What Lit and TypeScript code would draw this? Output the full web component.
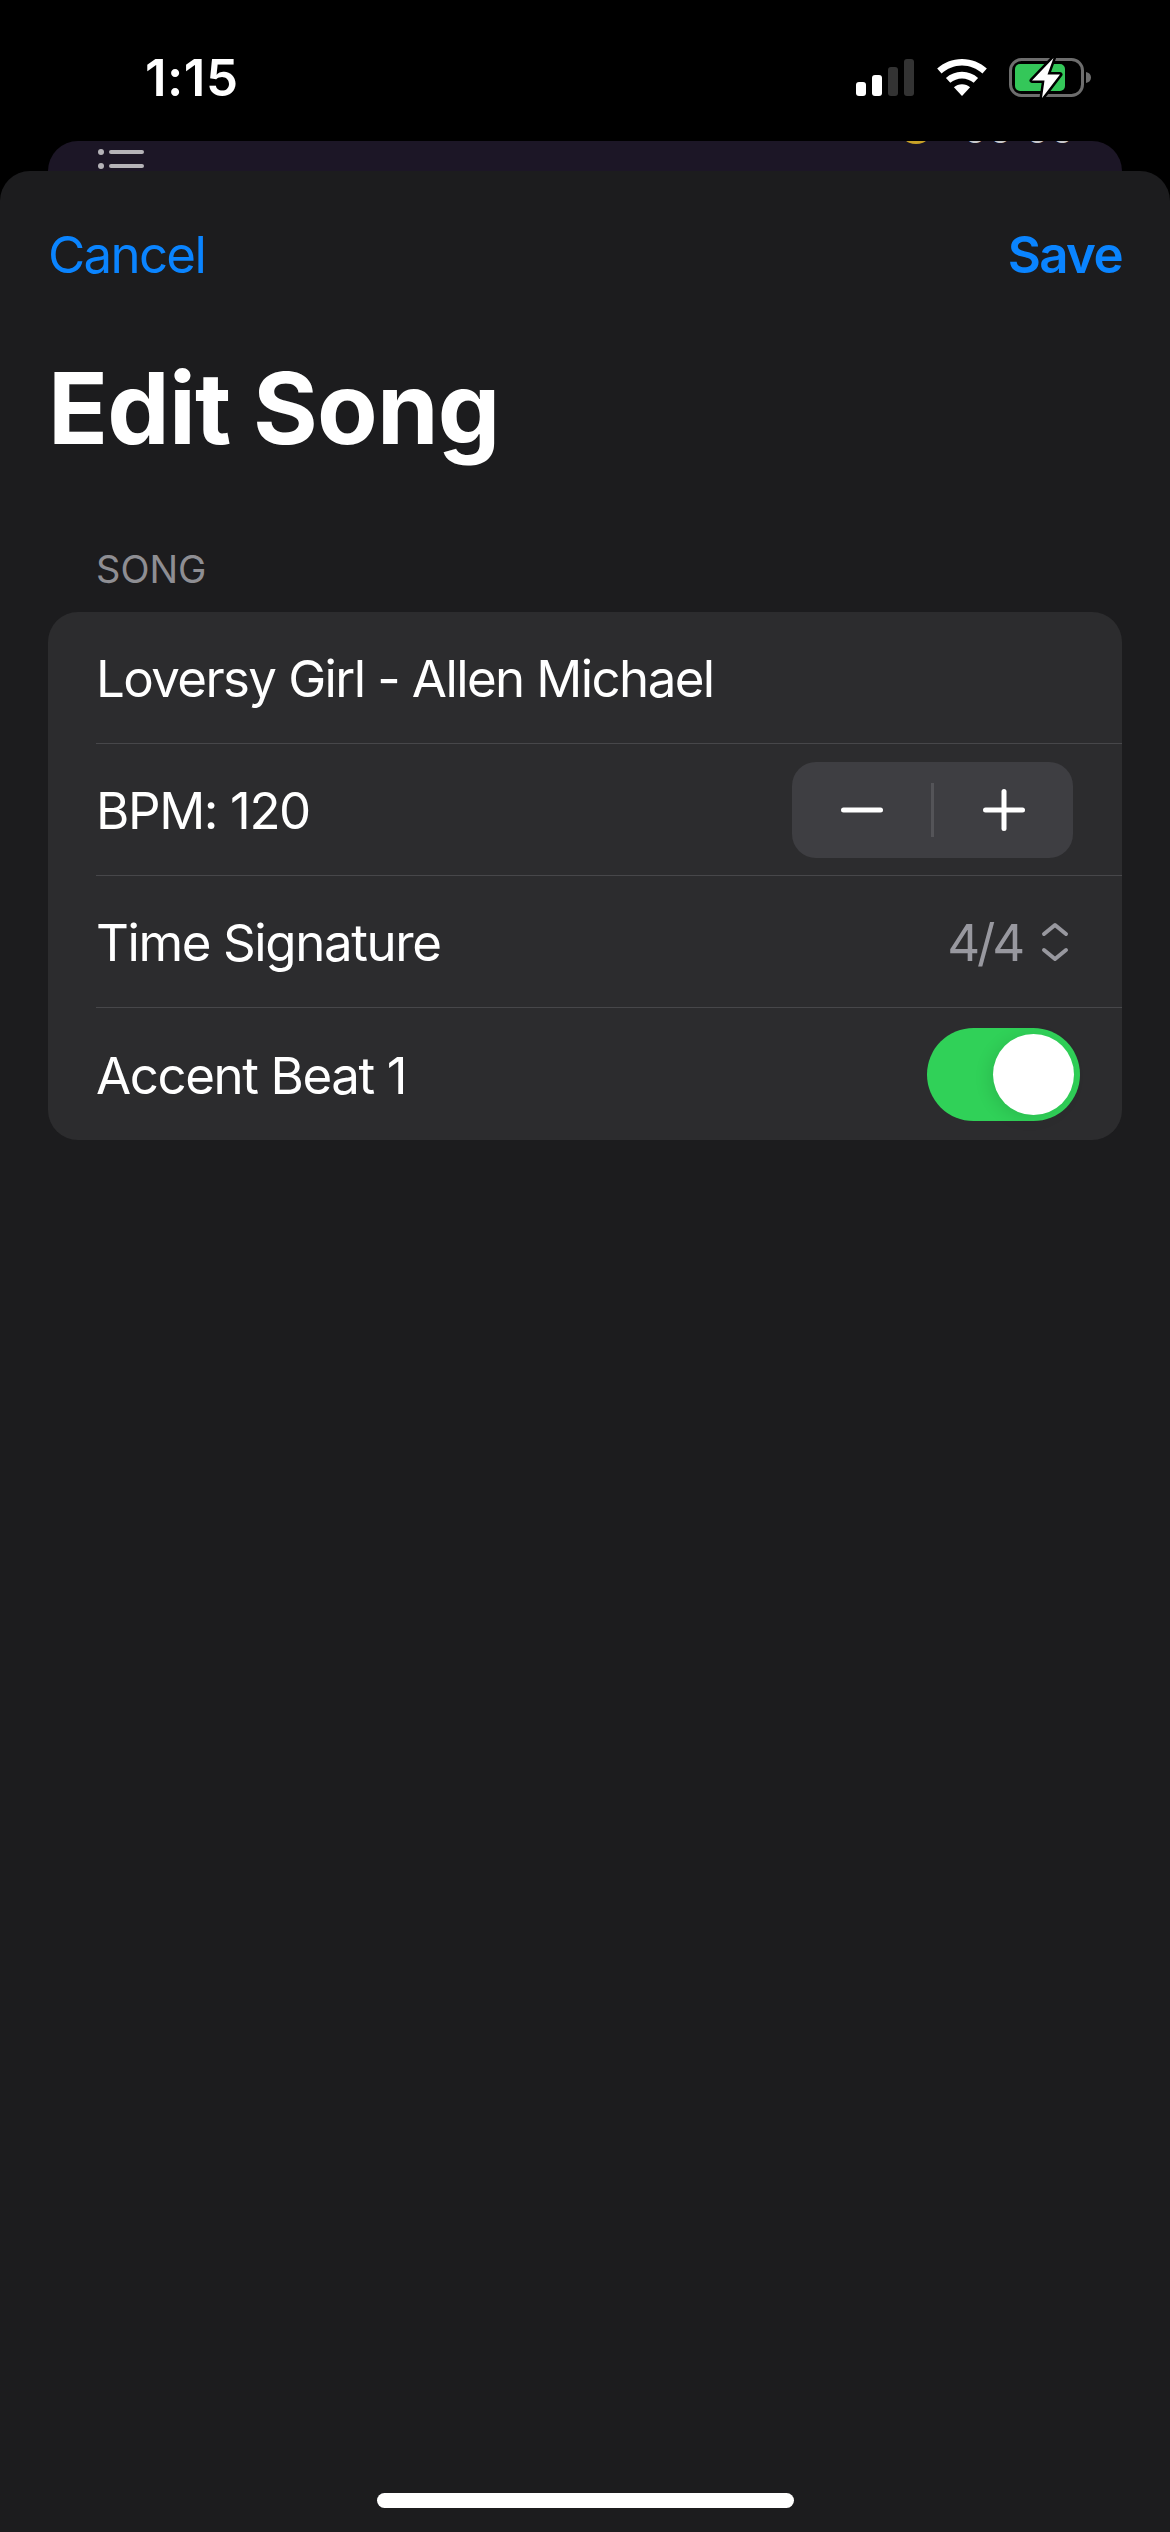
import { LitElement, html, css } from "lit";
import { customElement } from "lit/decorators.js";

@customElement("app-root")
export class AppRoot extends LitElement {
  static styles = css`
    :host {
      display: flex;
      flex-direction: column;
      width: 1170px;
      height: 2532px;
      background: #000;
      color: #fff;
      font-family: Inter, "Liberation Sans", sans-serif;
      overflow: hidden;
    }
    .status {
      height: 141px;
      flex: none;
      display: flex;
      justify-content: space-between;
      padding: 0 79px 0 145px;
      box-sizing: border-box;
    }
    .time {
      margin-top: 48px;
      font-size: 51px;
      line-height: 60px;
      font-weight: 600;
      letter-spacing: 0.5px;
    }
    .indicators {
      display: flex;
      align-items: flex-start;
      margin-top: 59px;
      gap: 23px;
    }
    .battery {
      margin: -2px 0 0 -1px;
    }
    .peek {
      height: 30px;
      flex: none;
      margin: 0 48px;
      background: #1c1626;
      border-radius: 30px 30px 0 0;
      overflow: hidden;
      display: flex;
      justify-content: space-between;
      padding: 0 47px 0 48px;
    }
    .peek-right {
      display: flex;
      align-items: flex-end;
      gap: 28px;
      height: 4px;
    }
    .peek-dot {
      width: 36px;
      height: 36px;
      border-radius: 50%;
      background: #c9a227;
      flex: none;
      margin-bottom: 1px;
    }
    .peek-time {
      font-size: 39px;
      line-height: 40px;
      font-weight: 500;
      color: #c8c8cc;
      margin-bottom: -4px;
    }
    .sheet {
      flex: 1;
      background: #1c1c1e;
      border-radius: 30px 30px 0 0;
      padding: 0 48px;
      display: flex;
      flex-direction: column;
    }
    .nav {
      display: flex;
      justify-content: space-between;
      margin-top: 54px;
      font-size: 51px;
      line-height: 60px;
      color: #0a84ff;
      letter-spacing: -1.7px;
    }
    .save {
      font-weight: 600;
      letter-spacing: -1.6px;
    }
    h1 {
      margin: 63px 0 0;
      font-size: 99px;
      line-height: 120px;
      font-weight: 700;
      letter-spacing: -0.8px;
    }
    .section {
      margin: 78px 0 0 48px;
      font-size: 38px;
      line-height: 46px;
      color: #8e8e93;
    }
    .card {
      margin-top: 20px;
      background: #2c2c2e;
      border-radius: 30px;
      overflow: hidden;
    }
    .row {
      height: 132px;
      box-sizing: border-box;
      margin-left: 48px;
      padding-right: 49px;
      display: flex;
      align-items: center;
      justify-content: space-between;
      font-size: 51px;
      letter-spacing: -1.4px;
      border-bottom: 1px solid #47474a;
    }
    .row:first-child {
      letter-spacing: -1.6px;
    }
    .row:last-child {
      border-bottom: none;
      padding-right: 42px;
    }
    .label {
      padding-top: 2px;
    }
    .stepper {
      width: 281px;
      height: 96px;
      border-radius: 24px;
      background: #3e3e42;
      display: flex;
      align-items: center;
    }
    .step {
      flex: 1;
      display: flex;
      justify-content: center;
    }
    .step-sep {
      width: 3px;
      height: 54px;
      background: #545458;
    }
    .picker {
      display: flex;
      align-items: center;
      gap: 19px;
      margin-right: 4px;
      color: #98989f;
      letter-spacing: -3.2px;
    }
    .toggle {
      width: 153px;
      height: 93px;
      border-radius: 47px;
      background: #30d158;
      display: flex;
      align-items: center;
      justify-content: flex-end;
      padding: 0 6px;
      box-sizing: border-box;
    }
    .knob {
      width: 81px;
      height: 81px;
      border-radius: 50%;
      background: #fff;
      box-shadow: -4px 3px 16px rgba(0, 0, 0, 0.1);
    }
    .home {
      width: 417px;
      height: 15px;
      flex: none;
      margin: auto 0 24px 329px;
      border-radius: 8px;
      background: #fff;
    }
  `;

  render() {
    return html`
      <div class="status">
        <div class="time">1:15</div>
        <div class="indicators">
          <svg width="58" height="38" viewBox="0 0 58 38">
            <rect x="0" y="23" width="10" height="14" rx="3" fill="#fff" />
            <rect x="16" y="16" width="10" height="21" rx="3" fill="#fff" />
            <rect x="32" y="8" width="10" height="29" rx="3" fill="#333" />
            <rect x="48" y="0" width="10" height="37" rx="3" fill="#333" />
          </svg>
          <svg width="50" height="37" viewBox="0 0 51 38">
            <path d="M25.500 0C15.500 0 6.800 3.700 0 9.800l4.500 5.200C10.200 10 17.500 6.800 25.500 6.800S40.800 10 46.500 15L51 9.800C44.200 3.700 35.500 0 25.500 0Z" fill="#fff" />
            <path d="M25.500 13C19 13 13.500 15.400 9 19.400l4.500 5.100C17 21.600 21 20 25.500 20s8.500 1.600 12 4.500l4.500-5.100C37.500 15.400 32 13 25.500 13Z" fill="#fff" />
            <path d="M25.500 26c-3.200 0-6 1-8.300 3l8.300 9 8.300-9c-2.300-2-5.100-3-8.300-3Z" fill="#fff" />
          </svg>
          <svg class="battery" width="82" height="42" viewBox="0 0 82 42">
            <rect x="1.500" y="2.500" width="72" height="36" rx="11" fill="none" stroke="#6d6d6d" stroke-width="3" />
            <rect x="6" y="7" width="50" height="27" rx="5" fill="#34c759" />
            <path d="M77 15c3 .6 5 2.500 5 5.500s-2 4.900-5 5.500Z" fill="#6d6d6d" />
            <path d="M44.500 1 23 23.500h12.500L33 41l18-23.500H38.500Z" fill="#fff" stroke="#000" stroke-width="5" stroke-linejoin="round" paint-order="stroke" />
          </svg>
        </div>
      </div>

      <div class="peek">
        <svg width="48" height="30" viewBox="0 0 48 30">
          <circle cx="5" cy="11" r="3" fill="#b5b3b8" />
          <circle cx="5" cy="25" r="3" fill="#b5b3b8" />
          <rect x="13" y="9" width="35" height="4" rx="2" fill="#b5b3b8" />
          <rect x="13" y="23" width="35" height="4" rx="2" fill="#b5b3b8" />
        </svg>
        <div class="peek-right">
          <div class="peek-dot"></div>
          <div class="peek-time">00:00</div>
        </div>
      </div>

      <div class="sheet">
        <div class="nav">
          <span>Cancel</span>
          <span class="save">Save</span>
        </div>
        <h1>Edit Song</h1>
        <div class="section">SONG</div>
        <div class="card">
          <div class="row"><span class="label">Loversy Girl - Allen Michael</span></div>
          <div class="row">
            <span class="label">BPM: 120</span>
            <div class="stepper">
              <div class="step">
                <svg width="42" height="6" viewBox="0 0 42 6"><rect width="42" height="5" y="0.500" rx="2.500" fill="#fff" /></svg>
              </div>
              <div class="step-sep"></div>
              <div class="step">
                <svg width="42" height="42" viewBox="0 0 42 42">
                  <rect y="18.500" width="42" height="5" rx="2.500" fill="#fff" />
                  <rect x="18.500" width="5" height="42" rx="2.500" fill="#fff" />
                </svg>
              </div>
            </div>
          </div>
          <div class="row">
            <span class="label">Time Signature</span>
            <div class="picker">
              <span class="label">4/4</span>
              <svg width="28" height="40" viewBox="0 0 28 40" fill="none" stroke="#98989f" stroke-width="4" stroke-linecap="round" stroke-linejoin="round">
                <path d="M3 12l11-9 11 9" />
                <path d="M3 28l11 9 11-9" />
              </svg>
            </div>
          </div>
          <div class="row">
            <span class="label">Accent Beat 1</span>
            <div class="toggle"><div class="knob"></div></div>
          </div>
        </div>
        <div class="home"></div>
      </div>
    `;
  }
}
